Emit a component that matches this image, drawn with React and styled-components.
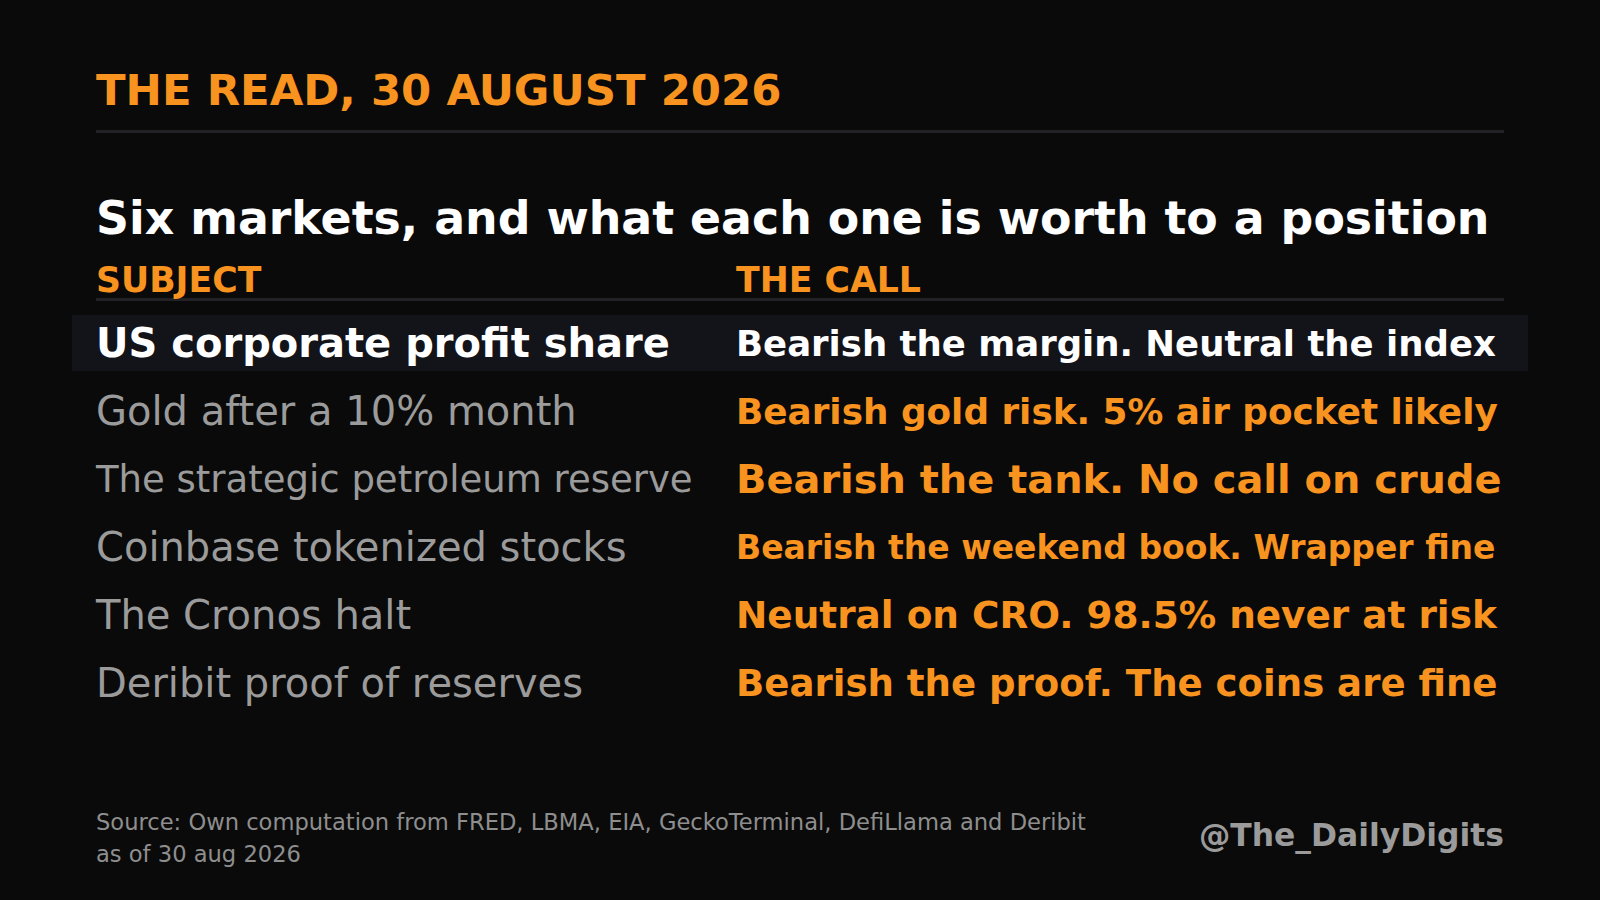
import React from "react";
import styled, { createGlobalStyle } from "styled-components";

const rows = [
  { subject: "US corporate profit share", call: "Bearish the margin. Neutral the index", subjectSize: 40, callSize: 35.5, active: true },
  { subject: "Gold after a 10% month", call: "Bearish gold risk. 5% air pocket likely", subjectSize: 40, callSize: 35.8 },
  { subject: "The strategic petroleum reserve", call: "Bearish the tank. No call on crude", subjectSize: 37, callSize: 39.9 },
  { subject: "Coinbase tokenized stocks", call: "Bearish the weekend book. Wrapper fine", subjectSize: 40, callSize: 33 },
  { subject: "The Cronos halt", call: "Neutral on CRO. 98.5% never at risk", subjectSize: 40, callSize: 37.4 },
  { subject: "Deribit proof of reserves", call: "Bearish the proof. The coins are fine", subjectSize: 40, callSize: 37.1 },
];

const App = () => {
  return (
    <Page>
      <GlobalStyle />
      <Title>THE READ, 30 AUGUST 2026</Title>
      <Rule />
      <Heading>Six markets, and what each one is worth to a position</Heading>
      <HeaderRow>
        <ColLabel>SUBJECT</ColLabel>
        <ColLabel>THE CALL</ColLabel>
      </HeaderRow>
      <Table>
        {rows.map((row, index) => (
          <Row key={index} $active={row.active}>
            <Subject $size={row.subjectSize} $active={row.active}>
              {row.subject}
            </Subject>
            <Call $size={row.callSize} $active={row.active}>
              {row.call}
            </Call>
          </Row>
        ))}
      </Table>
      <Footer>
        <Source>
          Source: Own computation from FRED, LBMA, EIA, GeckoTerminal, DefiLlama and Deribit
          <br />
          as of 30 aug 2026
        </Source>
        <Handle>@The_DailyDigits</Handle>
      </Footer>
    </Page>
  );
};

const GlobalStyle = createGlobalStyle`
  html, body {
    margin: 0;
    padding: 0;
    background: #0a0a0a;
  }
  body {
    font-family: "DejaVu Sans", "Liberation Sans", sans-serif;
  }
`;

const Page = styled.div`
  width: 1600px;
  height: 900px;
  box-sizing: border-box;
  padding: 66px 96px 0;
  background: #0a0a0a;
  display: flex;
  flex-direction: column;
  overflow: hidden;
`;

const Title = styled.div`
  color: #f7931e;
  font-size: 43.4px;
  font-weight: 700;
  line-height: 48px;
`;

const Rule = styled.div`
  height: 3px;
  background: #222226;
  margin-top: 16px;
`;

const Heading = styled.div`
  color: #ffffff;
  font-size: 45.8px;
  font-weight: 700;
  line-height: 52px;
  margin-top: 59px;
`;

const HeaderRow = styled.div`
  display: grid;
  grid-template-columns: 640px 1fr;
  margin-top: 18px;
  border-bottom: 3px solid #222226;
`;

const ColLabel = styled.div`
  color: #f7931e;
  font-size: 34.7px;
  font-weight: 700;
  line-height: 36px;
`;

const Table = styled.div`
  display: flex;
  flex-direction: column;
  margin: 14px -24px 0;
`;

const Row = styled.div`
  display: grid;
  grid-template-columns: 640px 1fr;
  align-items: center;
  height: 56px;
  padding: 0 24px;
  margin-bottom: 12px;
  background: ${(p) => (p.$active ? "#13131a" : "transparent")};
`;

const Subject = styled.div`
  color: ${(p) => (p.$active ? "#ffffff" : "#9b9b9b")};
  font-size: ${(p) => p.$size}px;
  font-weight: ${(p) => (p.$active ? 700 : 400)};
  white-space: nowrap;
`;

const Call = styled.div`
  color: ${(p) => (p.$active ? "#ffffff" : "#f7931e")};
  font-size: ${(p) => p.$size}px;
  font-weight: 700;
  white-space: nowrap;
`;

const Footer = styled.div`
  display: flex;
  align-items: center;
  justify-content: space-between;
  margin-top: auto;
  margin-bottom: 30px;
`;

const Source = styled.div`
  color: #8e8e8e;
  font-size: 22.6px;
  line-height: 32px;
`;

const Handle = styled.div`
  color: #9b9b9b;
  font-size: 31.4px;
  font-weight: 700;
  margin-bottom: 6px;
`;

export default App;
